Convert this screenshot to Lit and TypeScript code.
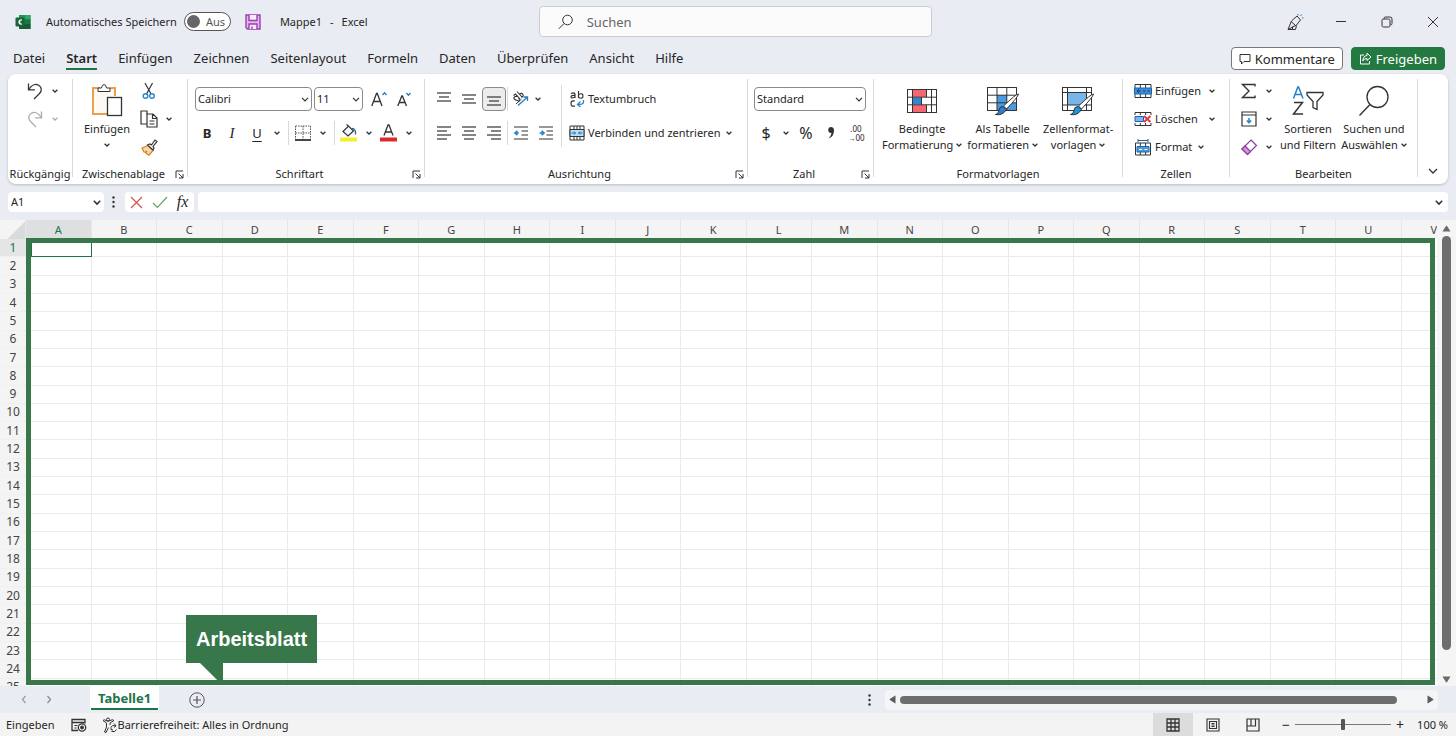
import { LitElement, html, css, svg, nothing, TemplateResult } from "lit";
import { customElement, state } from "lit/decorators.js";
import { classMap } from "lit/directives/class-map.js";

const TABS = ["Datei", "Start", "Einfügen", "Zeichnen", "Seitenlayout", "Formeln", "Daten", "Überprüfen", "Ansicht", "Hilfe"];
const COLUMNS = "ABCDEFGHIJKLMNOPQRSTUV".split("");
const ROWS = Array.from({ length: 25 }, (_, i) => i + 1);

const icon = (w: number, h: number, body: unknown) =>
  html`<svg class="icon" width=${w} height=${h} viewBox="0 0 ${w} ${h}" aria-hidden="true">${body}</svg>`;

const chevron = () => icon(6, 4, svg`<path d="M.6.8 3 3 5.4.8" stroke-width="1.3"/>`);
const boxChevron = () => icon(8, 5, svg`<path d="M1 .8 4 3.800 7 .8" stroke-width="1.200"/>`);
const wideChevron = () => icon(8, 5, svg`<path d="M.8.8 4 4 7.2.8" stroke-width="1.6"/>`);

const lines = (y: number, spans: [number, number][]) =>
  icon(16, 16, spans.map(([a, b], i) => svg`<path d="M${a} ${y + i * 4}H${b}" stroke-width="1.2"/>`));

const I = {
  excel: () => icon(16, 16, svg`<g stroke="none"><path d="M4 1h11.5v14H4z" fill="#1f7a45"/><path d="M9.500 1h6v4.500h-6z" fill="#2fa866"/><path d="M4 1h5.500v4.500H4z" fill="#21915a"/><path d="M9.500 5.500h6V10h-6z" fill="#107c41"/><path d="M4 10h11.500v5H4z" fill="#185c37"/><rect x=".5" y="3.500" width="9" height="9" rx="1" fill="#17653a"/></g><path d="M6.800 6.200A2 2 0 1 0 6.800 9.800M3.500 8h2" stroke="#fff" stroke-width="1.300"/>`),
  save: () => icon(16, 16, svg`<g stroke="#9b3fb0" stroke-width="1.400"><path d="M1 1h14v14H2.500L1 13.500z" fill="#e3b9ec"/><path d="M4 1v5.500h8V1" fill="#f7eafa"/><path d="M4 15v-5h8v5" fill="#f7eafa"/><path d="M7 12.500V15"/></g>`),
  search: () => icon(16, 16, svg`<circle cx="9.500" cy="6" r="4.800"/><path d="M6 9.500.8 14.800"/>`),
  pen: () => icon(18, 18, svg`<path d="M2 16.500 5.500 8 11 3l3.500 4L10.500 12zM5 8.500l5 4.500M2 16.500h7.500l1-4M6.500 16.500v-3"/><path d="M12 1v1.500M14.500 3 15.500 1.500M16 5h1.500" stroke="#2b7bbb"/>`),
  min: () => icon(12, 12, svg`<path d="M1 5.500h10"/>`),
  restore: () => icon(12, 12, svg`<rect x="1" y="3" width="8" height="8" rx="1.500"/><path d="M3 3V2.500Q3 1 4.500 1H9q2 0 2 2v4.500Q11 9 9.500 9"/>`),
  close: () => icon(12, 12, svg`<path d="M1 1l10 10M11 1 1 11"/>`),
  comment: () => icon(12, 12, svg`<path d="M1 1.500h10v7H5L2.500 11V8.500H1z"/>`),
  share: () => icon(13, 13, svg`<path d="M5 3H1.500v9h9V9M8 1.200 12 5 8 8.500V6.500Q5 6.300 3.800 9 4 4 8 3.500z"/>`),
  undo: () => icon(16, 18, svg`<path d="M1.500 1.500v6.300h6.300M1.800 7.500C4.500 3 8.500 1.500 11.700 3.200c3.300 2 3.300 5.800.8 8.300L7 17" stroke-width="1.300"/>`),
  redo: () => icon(16, 18, svg`<path d="M14.500 1.500v6.300H8.200M14.200 7.500C11.500 3 7.500 1.500 4.300 3.200c-3.300 2-3.300 5.800-.8 8.300L9 17" stroke-width="1.300"/>`),
  paste: () => icon(32, 34, svg`<path d="M9 5H2v26h14M19 5h5v8" stroke="#e8a04a" stroke-width="2"/><path d="M3.500 6.500h19v8h-6v15h-13z" fill="#fdfaf5" stroke="none"/><path d="M7 8.500V5h3.500Q11 1.500 13 1.500T15.500 5H19v3.500z" fill="#fff"/><rect x="16.500" y="14.500" width="14" height="18" fill="#fff" stroke-width="1.300"/>`),
  cut: () => icon(14, 18, svg`<path d="M3 1l6 11M10.500 1l-6 11" stroke-width="1.200"/><circle cx="3.500" cy="14" r="2.300" stroke="#2b88c8" stroke-width="1.400"/><circle cx="10" cy="14" r="2.300" stroke="#2b88c8" stroke-width="1.400"/>`),
  copy: () => icon(18, 18, svg`<path d="M7 14H1V1h6v3" stroke-width="1.200"/><path d="M7 4h6l4 4v9H7zM12.500 4v4.500H17M9.500 11h5M9.500 14h5" fill="#fff" stroke-width="1.200"/>`),
  brush: () => icon(17, 17, svg`<path d="M1 9 7 6.500l5 5L8 16q-2-.5-3-2l1-2q-1.500 1.500-3 1z" fill="#f8d9ae" stroke="#d9822b" stroke-width="1.300"/><path d="M6.500 6 9 5l1.500 1 3.500-5 2 1.500L12 7.500l1 1.500-1 2z" fill="#fff" stroke-width="1.200"/>`),
  launcher: () => icon(9, 9, svg`<path d="M1 8V1h7M3.500 3.500 8 8M8 4v4H4"/>`),
  grow: () => icon(16, 16, svg`<path d="M.8 15 5.500 2.500h.8L11 15M2.500 10.500h7" stroke-width="1.300"/><path d="M11.500 4l2-2.200 2 2.200" stroke="#2b7bbb" stroke-width="1.300"/>`),
  shrink: () => icon(14, 16, svg`<path d="M.8 15 4.800 5h.6L9.500 15M2.300 11.500H8" stroke-width="1.300"/><path d="M9.500 2l2 2.200 2-2.200" stroke="#2b7bbb" stroke-width="1.300"/>`),
  borders: () => icon(16, 16, svg`<path d="M.5 1h15M.5 8h15M.5 1v13M8 1v13M15.500 1v13" stroke="#555" stroke-dasharray="1.500 1"/><path d="M0 15h16" stroke-width="1.800"/>`),
  fill: () => icon(18, 18, svg`<path d="M0 13.500h17v4H0z" fill="#f3ee2d" stroke="none"/><path d="M3 7.500 8.500 2l5 5L8 12zM8.500 2 6.500.5" fill="#f4f8fc" stroke-width="1.200"/><path d="M12 4.500q4 0 3.500 6" stroke="#2b5f93" stroke-width="1.300"/>`),
  fontColor: () => icon(18, 18, svg`<path d="M0 13.500h17v4H0z" fill="#d92b2b" stroke="none"/><path d="M4 11.500 8 1h1l4 10.500M5.500 8h6" stroke-width="1.300"/>`),
  orient: () => icon(18, 16, svg`<path d="M6 14.500 15 6.500M11.500 6h4v4" stroke="#2b7bbb" stroke-width="1.300"/><path d="M1.500 4.500 3.500 3 8 8M5.500 5.500Q3 5 2 6.500T5 9.500 6.500 7" stroke-width="1.100"/><path d="M5 .5 10.500 6.500M7.500 3Q10 1.500 11 3.500T9 6" stroke-width="1.100"/><path d="M4 13 9.500 8"/>`),
  wrap: () => icon(16, 18, svg`<path d="M2 3.500Q5 2 6 4v4M6 5.500Q2 5 2 7t4 0M9.500 1v7M9.500 4.500Q14 2.500 14 6T9.500 7.500M6 11q-4-1-4 2.500T6 16" stroke-width="1.200"/><path d="M14.500 10v2q0 2.500-5 2.500M11.500 11.500l-3 3 3 2.500" stroke="#2b88c8" stroke-width="1.300"/>`),
  merge: () => icon(16, 16, svg`<path d="M1 1h14v14H1z" fill="#fff"/><path d="M1 4.500h14v7H1z" fill="#b9ddf5"/><path d="M8 1v3M8 12v3M1 4.500h14M1 11.500h14M5 1v3M11 1v3M5 12v3M11 12v3"/><path d="M2.500 8h4M9.500 8h4M5 6.500 6.500 8 5 9.500M11 6.500 9.500 8 11 9.500" stroke="#1d6fb0"/>`),
  outdent: () => icon(16, 16, svg`<path d="M1 2h14M8.500 6H15M8.500 10H15M1 14h14" stroke-width="1.200"/><path d="M5.800 8H3M4.500 6 2 8l2.500 2" stroke="#2b88c8" stroke-width="1.700"/>`),
  indent: () => icon(16, 16, svg`<path d="M1 2h14M8.500 6H15M8.500 10H15M1 14h14" stroke-width="1.200"/><path d="M1.500 8H5M3.500 6 6 8l-2.500 2" stroke="#2b88c8" stroke-width="1.700"/>`),
  condFormat: () => icon(32, 26, svg`<path d="M1.500 1.500h29v23h-29z" fill="#fff"/><path d="M7 2h13v7H7zM7 17h14v7H7z" fill="#f5686f" stroke="none"/><path d="M7 9.500h8v7H7z" fill="#2f86d6" stroke="none"/><path d="M1.500 1.500h29v23h-29zM1.500 9.200h29M1.500 16.800h29M6.500 1.500v23M20.500 1.500v7.700M20.500 16.800v7.700M15.500 9.200v7.600M25.500 1.500v23"/>`),
  tableFormat: () => icon(34, 30, svg`<path d="M1.500 1.500h29v23h-29z" fill="#fff"/><path d="M11 9h10v15.500H11zM21 17h9.500v7.500H21z" fill="#4a9be2" stroke="none"/><path d="M1.500 1.500h29v23h-29zM1.500 9.200h29M1.500 16.800h29M11 1.500v23M20.800 1.500v23"/><path d="M32.500 8Q30 8 17.500 20l3 3Q32 11 32.500 8z" fill="#fff"/><path d="M17 20.500q-4 0-4 4-.5 3.500-3.500 4 7 1.500 11-5z" fill="#2f7fd0"/>`),
  cellFormat: () => icon(34, 30, svg`<path d="M1.500 1.500h29v23h-29z" fill="#fff"/><path d="M6.500 7h19v12h-19z" fill="#76b6e8" stroke="none"/><path d="M1.500 1.500h29v23h-29zM1.500 6.500h29M1.500 19h29M6.500 1.500v23M25.500 1.500v23"/><path d="M32.500 8Q30 8 17.500 20l3 3Q32 11 32.500 8z" fill="#fff"/><path d="M17 20.500q-4 0-4 4-.5 3.500-3.500 4 7 1.500 11-5z" fill="#1f93dc"/>`),
  insertCells: () => icon(18, 16, svg`<path d="M1 1.500h16v13H1zM6.300 1.500v13M11.600 1.500v13"/><path d="M.5 5h17v6H.5z" fill="#3d8fdd" stroke="#1c65a8"/><path d="M3 8h4M5 6 3 8l2 2M9 8h2.500M13.500 8H16" stroke="#0f3d6b"/>`),
  deleteCells: () => icon(18, 16, svg`<path d="M1 4V1.500h16V4M1 12v2.500h16V12M6.300 1.500V4M11.600 1.500V4M6.300 12v2.500M11.600 12v2.500"/><path d="M1 5.500h8.500v5H1z" fill="#7fb7ea" stroke="#1c65a8"/><path d="M10 5l6.500 6M16.500 5 10 11" stroke="#dd3540" stroke-width="1.800"/>`),
  formatCells: () => icon(18, 18, svg`<path d="M4 1v3M14 1v3M4 2.500h10" stroke="#1c65a8"/><path d="M1.500 5h15v12h-15zM6.300 5v12M11.600 5v12"/><path d="M3 8.500h12v5.500H3z" fill="#4c9be0" stroke="#1c65a8"/><path d="M5 11.500h3M10.500 11.500h3" stroke="#fff"/>`),
  sum: () => icon(16, 16, svg`<path d="M14 3.500V1.500H1.500L8 8l-6.500 6.500H14v-2" stroke-width="1.400"/>`),
  fillDown: () => icon(16, 16, svg`<path d="M1 1h14v14H1zM1 4h14" stroke-width="1.200"/><path d="M8 7v4.500M5.800 9.500 8 11.700l2.200-2.200" stroke="#2b88c8" stroke-width="1.600"/>`),
  eraser: () => icon(16, 16, svg`<path d="M10 1 15.500 6.500 6.500 15.500 1 10z" fill="#fff" stroke="#8c3c9e" stroke-width="1.200"/><path d="M4 7l5.500 5.500-3 3L1 10z" fill="#d893e0" stroke="#8c3c9e" stroke-width="1.200"/>`),
  sort: () => icon(34, 32, svg`<path d="M2.500 13.500 6.800 2h.8L12 13.500M4 9.500h6.500" stroke="#2580c8" stroke-width="1.500"/><path d="M3 17.500h8.500L2.500 29H12" stroke-width="1.500"/><path d="M16 7.500h16v2.500l-6 6.500v8l-4-2v-6l-6-6.500z" stroke-width="1.300"/>`),
  find: () => icon(32, 32, svg`<circle cx="19.500" cy="12" r="10.500" stroke-width="1.300"/><path d="M12 19.500 1.500 30.500" stroke-width="1.400"/>`),
  cancel: () => icon(13, 13, svg`<path d="M1 1l11 11M12 1 1 12" stroke="#c9564f" stroke-width="1.200"/>`),
  accept: () => icon(16, 13, svg`<path d="M1 7l4.500 4.500L15 1" stroke="#5fa36b" stroke-width="1.200"/>`),
  dots: () => icon(3, 12, svg`<g fill="#333" stroke="none"><circle cx="1.500" cy="1.500" r="1.200"/><circle cx="1.500" cy="6" r="1.200"/><circle cx="1.500" cy="10.500" r="1.200"/></g>`),
  prev: () => icon(6, 9, svg`<path d="M4.500 1 1.500 4.500l3 3.500" stroke="#9a9a9a" stroke-width="1.200"/>`),
  next: () => icon(6, 9, svg`<path d="M1.500 1l3 3.500-3 3.500" stroke="#8a8a8a" stroke-width="1.200"/>`),
  add: () => icon(16, 16, svg`<circle cx="8" cy="8" r="7.200" stroke="#555"/><path d="M8 4v8M4 8h8" stroke="#555" stroke-width="1.200"/>`),
  macro: () => icon(16, 14, svg`<path d="M14 5.500V1.500H1v11h6M1 4.500h13" stroke-width="1.300"/><path d="M3.500 7.500h3M3.500 10h2"/><circle cx="11" cy="9.500" r="3.700" stroke-width="1.300"/><circle cx="11" cy="9.500" r="1.500" fill="#333"/>`),
  access: () => icon(16, 16, svg`<circle cx="6" cy="2.500" r="1.500"/><path d="M1 3.500q1-1.500 3 0 2 1.500 4 0 3-1.500 4 0L8 6v2M1 3.500 4.500 6v4l-2 5 1.500.5 2.500-5"/><path d="M14 9q-4-1.500-5 1.500T11 13M14.500 12.500q-1 3-5 2M12 6.500l2 2.300-2 1.700"/>`),
  viewNormal: () => icon(14, 14, svg`<path d="M1 1h12v12H1zM5 1v12M9 1v12M1 5h12M1 9h12" stroke-width="1.300"/>`),
  viewPage: () => icon(14, 14, svg`<path d="M1 1h12v12H1zM3.500 3.500h7v7h-7zM5.500 5.500h3M5.500 7h3M5.500 8.500h3" stroke-width="1.100"/>`),
  viewBreak: () => icon(14, 14, svg`<path d="M1 1h12v12H1zM5 1v7h4.500V1M1 8h4" stroke-width="1.200"/>`),
  triUp: () => icon(9, 7, svg`<path d="M4.500.5Q5 .5 8.500 6.500h-8Q4 .5 4.500.5z" fill="#6b6b6b" stroke="none"/>`),
  triDown: () => icon(9, 7, svg`<path d="M.5.5h8Q5 6.500 4.500 6.500T.5.5z" fill="#6b6b6b" stroke="none"/>`),
  triLeft: () => icon(7, 9, svg`<path d="M6.500.5v8Q.5 5 .5 4.500T6.500.5z" fill="#5c5c5c" stroke="none"/>`),
  triRight: () => icon(7, 9, svg`<path d="M.5.5v8Q6.500 5 6.500 4.500T.5.5z" fill="#5c5c5c" stroke="none"/>`),
};

@customElement("app-root")
export class AppRoot extends LitElement {
  @state() private activeTab = "Start";

  static styles = css`
    :host {
      --ink: #262626;
      --green: #217346;
      --frame: #37774a;
      --rule: #d9d9d9;
      display: flex;
      flex-direction: column;
      height: 100vh;
      min-height: 480px;
      overflow: hidden;
      background: #e9ecf2;
      color: var(--ink);
      font: 11px/16px "Noto Sans", "Open Sans", sans-serif;
    }
    *, *::before, *::after { box-sizing: border-box; }
    button, input, select { font: inherit; color: inherit; margin: 0; }
    button { display: inline-flex; align-items: center; justify-content: center; padding: 0; border: 0; background: none; }
    .icon { display: block; flex: none; fill: none; stroke: #333; stroke-width: 1; overflow: visible; }

    .titlebar { display: grid; grid-template-columns: 37fr 27fr 36fr; align-items: center; height: 43px; flex: none; }
    .title-left { display: flex; align-items: center; padding-left: 15px; white-space: nowrap; }
    .auto { display: flex; align-items: center; gap: 7px; margin: 0 14px 0 15px; }
    .pill { display: flex; align-items: center; gap: 6px; width: 47px; height: 19px; border: 1px solid #555; border-radius: 10px; background: #fff; padding-left: 2px; color: #555; }
    .switch { appearance: none; width: 13px; height: 13px; border-radius: 50%; background: #666; }
    .doc { display: flex; gap: 8px; margin-left: 19px; }
    .search { display: flex; align-items: center; gap: 11px; height: 31px; padding: 0 18px; border: 1px solid #c9ccd1; border-radius: 4px; background: #fbfbfc; font-size: 13px; }
    .search input { flex: 1; min-width: 0; border: 0; outline: 0; background: none; }
    .search input::placeholder { color: #666; opacity: 1; }
    .window { display: flex; justify-content: flex-end; align-items: center; }
    .window button { width: 46px; height: 32px; }

    .tabs { display: flex; align-items: center; height: 31px; flex: none; padding: 0 11px 0 13px; font-size: 13px; line-height: 20px; }
    .tabs nav { display: flex; gap: 21px; flex: 1; }
    .tabs a { margin-top: 1px; color: inherit; text-decoration: none; border-bottom: 2px solid transparent; }
    .tabs a.on { font-weight: 600; border-color: var(--green); }
    .pillbtn { height: 23px; gap: 4px; padding: 0 7px; border: 1px solid #777; border-radius: 4px; background: #fff; }
    .pillbtn.share { margin-left: 8px; background: #23793f; border-color: #23793f; color: #fff; }
    .pillbtn.share .icon { stroke: #fff; }

    .ribbon { display: flex; flex: none; height: 110px; margin: 0 8px; border-radius: 8px; background: #fff; box-shadow: 0 1px 3px #0003; }
    .rule { flex: none; width: 1px; height: 98px; margin-top: 5px; background: var(--rule); }
    .group { display: flex; flex-direction: column; justify-content: space-between; flex: none; padding-bottom: 2px; }
    .label { display: flex; align-items: center; text-align: center; }
    .label span { flex: 1; }
    .label button { margin-right: 3px; width: 10px; height: 10px; }
    .g-undo { width: 64px; }
    .g-clip { width: 114px; }
    .g-font { width: 236px; }
    .g-align { width: 322px; }
    .g-num { width: 125px; }
    .g-style { width: 248px; }
    .g-cells { width: 106px; }
    .g-edit { width: 187px; }
    .rows { display: grid; align-content: start; align-items: center; }
    .r28 { grid-auto-rows: 28px; padding-top: 3px; }
    .r34 { grid-auto-rows: 24px; row-gap: 10px; padding-top: 13px; }
    .row { display: flex; align-items: center; gap: 1px; }
    .ib { width: 24px; height: 24px; font-size: 13px; }
    .ib.on { border: 1px solid #8a8a8a; border-radius: 4px; background: #ececec; }
    .cb { width: 14px; height: 24px; }
    .cb.tight { width: 8px; }
    .off { opacity: .4; }
    .tb { gap: 3px; height: 24px; justify-content: flex-start; }
    .tb .icon:last-child { margin-left: 3px; }
    .wide span { min-width: 46px; text-align: left; }
    .sep { width: 1px; height: 24px; margin: 0 1px 0 3px; background: var(--rule); }
    .align .sep { margin: 0; }
    .bold { font-weight: 700; }
    .ital { font: italic 15px "Liberation Serif", serif; }
    .und { text-decoration: underline; text-underline-offset: 3px; }
    .sign { font-size: 16px; }
    .tiny { font-size: 8px; line-height: 9px; }
    .combo { position: relative; display: flex; align-items: center; }
    .combo select { appearance: none; width: 100%; height: 24px; padding: 0 2px; border: 1px solid #8a8a8a; border-radius: 4px; background: #fff; outline: 0; }
    .combo .icon { position: absolute; right: 3px; pointer-events: none; }
    .c-font { width: 117px; margin-right: 1px; }
    .c-size { width: 49px; margin-right: 3px; }
    .c-num { width: 112px; }
    .big { flex-direction: column; justify-content: flex-start; white-space: nowrap; }
    .big .pic { display: flex; align-items: center; height: 32px; margin-bottom: 4px; }
    .big .line { display: flex; align-items: center; gap: 3px; height: 16px; }
    .bigs { display: flex; align-items: flex-start; padding-top: 11px; }
    .g-undo .rows { padding-left: 15px; }
    .clip { display: flex; align-items: flex-start; padding-left: 11px; }
    .clip .big { padding-top: 9px; margin-right: 7px; }
    .clip .big .pic { height: 34px; }
    .g-font .rows { padding-left: 7px; }
    .g-num .rows { padding-left: 6px; }
    .align { display: flex; padding-left: 7px; }
    .align .tall { width: 1px; height: 62px; margin: 11px 7px 0 0; background: var(--rule); }
    .align .left { width: 129px; }
    .g-style .bigs { padding-left: 8px; gap: 5px; }
    .g-cells .rows { padding-left: 11px; }
    .g-cells .wide .icon:last-child { margin-left: 5px; }
    .edit { display: flex; padding-left: 7px; }
    .edit .bigs { gap: 5px; padding-left: 4px; }
    .fold { flex: 1; display: flex; align-items: flex-end; justify-content: center; padding-bottom: 7px; }
    .fold button { width: 20px; height: 12px; }

    .formula { display: flex; align-items: center; flex: none; height: 20px; margin: 8px; gap: 4px; }
    .name { width: 96px; margin-right: 4px; }
    .name select { height: 20px; border-color: #fff; }
    .fx { display: flex; align-items: center; height: 20px; margin-left: 6px; background: #fff; border-radius: 4px; }
    .fx button { width: 23px; height: 20px; }
    .fx .func { font: italic 16px "Liberation Serif", serif; }
    .entry { display: flex; flex: 1; align-items: center; height: 20px; padding-right: 5px; background: #fff; border-radius: 4px; }
    .entry input { flex: 1; min-width: 0; border: 0; outline: 0; background: none; height: 18px; }

    .work { display: flex; flex: 1; min-height: 0; background: #f5f5f6; }
    .sheet { position: relative; flex: 1; min-width: 0; overflow: hidden; background: #fff; }
    table { width: calc(100% + 30px); height: calc(100% + 11px); table-layout: fixed; border-collapse: separate; border-spacing: 0; }
    th { padding: 0; font-weight: 400; font-size: 12px; line-height: 16px; background: #f4f4f5; color: #444; }
    thead th { height: 19px; font-size: 11px; border-right: 1px solid #e6e6e8; }
    thead th.on { background: #dedfe0; color: var(--green); }
    tbody th { border-bottom: 1px solid #f0f0f1; }
    tbody th.on { background: #e4e5e6; color: var(--green); }
    .corner { width: 26px; background: linear-gradient(135deg, #f4f4f5 60%, #d9dadb 60%); }
    td { padding: 0; border-right: 1px solid #eaeaea; border-bottom: 1px solid #eaeaea; }
    td.on { border-color: var(--green); box-shadow: inset 5px 0 #fff, inset 6px 0 var(--green); }
    .frame { position: absolute; inset: 18px 2px 1px 26px; border: 5px solid var(--frame); pointer-events: none; }
    .callout { position: absolute; left: 186px; bottom: 23px; padding: 12px 10px; background: var(--frame); color: #fff; font: bold 20px/24px "Liberation Sans", Arial, sans-serif; }
    .callout::after { content: ""; position: absolute; top: 100%; left: 14px; width: 23px; height: 20px; background: var(--frame); clip-path: polygon(0 0, 100% 0, 100% 100%, 88% 100%); }
    .vbar { display: flex; flex-direction: column; align-items: center; width: 19px; gap: 3px; padding: 4px 0 2px; }
    .vbar button, .hbar button { flex: none; width: 9px; height: 9px; }
    .vtrack { flex: 1; width: 9px; }
    .vthumb { width: 9px; height: 95%; border-radius: 5px; background: #6e6e6e; }

    .sheets { display: flex; align-items: center; flex: none; height: 27px; }
    .sheets .step { width: 25px; height: 24px; }
    .steps { display: flex; width: 90px; padding-left: 11px; }
    .tab { align-self: stretch; margin-bottom: 3px; padding: 0 1px; background: #fff; color: var(--green); font-size: 13px; font-weight: 700; }
    .tab span { padding: 2px 7px 0; border-bottom: 2px solid var(--green); line-height: 20px; }
    .add { margin-left: 30px; }
    .space { flex: 1; }
    .hbar { display: flex; align-items: center; gap: 3px; width: 38%; height: 20px; margin: 0 18px 0 14px; padding: 0 3px; background: #f4f5f7; border-radius: 4px; }
    .htrack { flex: 1; height: 8px; }
    .hthumb { width: 95%; height: 8px; border-radius: 4px; background: #6e6e6e; }

    .status { display: flex; align-items: center; flex: none; height: 23px; padding: 0 8px 0 6px; background: #f3f3f3; white-space: nowrap; }
    .macro { margin: 0 15px 0 16px; }
    .view { width: 40px; height: 23px; }
    .view.on { background: #dcdcdc; }
    .zoom { display: flex; align-items: center; gap: 4px; margin: 0 12px 0 8px; }
    .zoom button { width: 10px; height: 16px; font-size: 14px; }
    input[type="range"] { appearance: none; width: 96px; height: 16px; background: linear-gradient(#777, #777) center / 100% 1px no-repeat; }
    input[type="range"]::-webkit-slider-thumb { appearance: none; width: 4px; height: 11px; border-radius: 1px; background: #555; }
  `;

  private ib(label: string, body: unknown, cls = "") {
    return html`<button class="ib ${cls}" aria-label=${label}>${body}</button>`;
  }

  private cb(label: string, cls = "") {
    return html`<button class="cb ${cls}" aria-label="${label}: Optionen">${chevron()}</button>`;
  }

  private combo(cls: string, label: string, value: string, arrow = boxChevron) {
    return html`<span class="combo ${cls}"><select aria-label=${label}><option>${value}</option></select>${arrow()}</span>`;
  }

  private big(pic: TemplateResult, first: string, second: string, menu = true) {
    return html`<button class="big"><span class="pic">${pic}</span><span class="line">${first}</span><span class="line">${second}${menu ? chevron() : nothing}</span></button>`;
  }

  private tb(pic: TemplateResult, text: string, menu = true, cls = "") {
    return html`<button class="tb ${cls}">${pic}<span>${text}</span>${menu ? chevron() : nothing}</button>`;
  }

  private group(cls: string, label: string, body: TemplateResult, launcher = false) {
    return html`<section class="group ${cls}" aria-label=${label}>
        ${body}
        <div class="label"><span>${label}</span>${launcher ? html`<button aria-label="${label}: Einstellungen">${I.launcher()}</button>` : nothing}</div>
      </section><span class="rule"></span>`;
  }

  private titlebar() {
    return html`<header class="titlebar">
      <div class="title-left">
        ${I.excel()}
        <label class="auto">Automatisches Speichern
          <span class="pill"><input class="switch" type="checkbox" role="switch" />Aus</span>
        </label>
        <button aria-label="Speichern">${I.save()}</button>
        <span class="doc"><span>Mappe1</span><span>-</span><span>Excel</span></span>
      </div>
      <label class="search">${I.search()}<input type="search" placeholder="Suchen" aria-label="Suchen" /></label>
      <div class="window">
        <button aria-label="Stift">${I.pen()}</button>
        <button aria-label="Minimieren">${I.min()}</button>
        <button aria-label="Wiederherstellen">${I.restore()}</button>
        <button aria-label="Schließen">${I.close()}</button>
      </div>
    </header>`;
  }

  private tabbar() {
    return html`<div class="tabs">
      <nav>${TABS.map((t) => html`<a href="#" class=${classMap({ on: t === this.activeTab })} @click=${(e: Event) => { e.preventDefault(); this.activeTab = t; }}>${t}</a>`)}</nav>
      <button class="pillbtn">${I.comment()}Kommentare</button>
      <button class="pillbtn share">${I.share()}Freigeben</button>
    </div>`;
  }

  private ribbon() {
    return html`<div class="ribbon">
      ${this.group("g-undo", "Rückgängig", html`<div class="rows r28">
        <div class="row">${this.ib("Rückgängig", I.undo())}${this.cb("Rückgängig")}</div>
        <div class="row off">${this.ib("Wiederholen", I.redo())}${this.cb("Wiederholen")}</div>
      </div>`)}
      ${this.group("g-clip", "Zwischenablage", html`<div class="clip">
        <button class="big"><span class="pic">${I.paste()}</span><span class="line">Einfügen</span><span class="line">${chevron()}</span></button>
        <div class="rows r28">
          <div class="row">${this.ib("Ausschneiden", I.cut())}</div>
          <div class="row">${this.ib("Kopieren", I.copy())}${this.cb("Kopieren")}</div>
          <div class="row">${this.ib("Format übertragen", I.brush())}</div>
        </div>
      </div>`, true)}
      ${this.group("g-font", "Schriftart", html`<div class="rows r34">
        <div class="row">${this.combo("c-font", "Schriftart", "Calibri")}${this.combo("c-size", "Schriftgrad", "11")}${this.ib("Schrift vergrößern", I.grow())}${this.ib("Schrift verkleinern", I.shrink())}</div>
        <div class="row">
          ${this.ib("Fett", "B", "bold")}${this.ib("Kursiv", "I", "ital")}${this.ib("Unterstrichen", "U", "und")}${this.cb("Unterstrichen")}
          <span class="sep"></span>${this.ib("Rahmen", I.borders())}${this.cb("Rahmen")}
          <span class="sep"></span>${this.ib("Füllfarbe", I.fill())}${this.cb("Füllfarbe")}${this.ib("Schriftfarbe", I.fontColor())}${this.cb("Schriftfarbe")}
        </div>
      </div>`, true)}
      ${this.group("g-align", "Ausrichtung", html`<div class="align">
        <div class="rows r34 left">
          <div class="row">
            ${this.ib("Oben ausrichten", lines(2, [[1, 15], [3, 13], [1, 15]]))}${this.ib("Zentriert ausrichten", lines(4, [[1, 15], [3, 13], [1, 15]]))}${this.ib("Unten ausrichten", lines(6, [[1, 15], [3, 13], [1, 15]]), "on")}
            <span class="sep"></span>${this.ib("Ausrichtung", I.orient())}${this.cb("Ausrichtung", "tight")}
          </div>
          <div class="row">
            ${this.ib("Linksbündig", lines(2, [[1, 15], [1, 11], [1, 15], [1, 11]]))}${this.ib("Zentriert", lines(2, [[1, 15], [3, 13], [1, 15], [3, 13]]))}${this.ib("Rechtsbündig", lines(2, [[1, 15], [5, 15], [1, 15], [5, 15]]))}
            <span class="sep"></span>${this.ib("Einzug verkleinern", I.outdent())}${this.ib("Einzug vergrößern", I.indent())}
          </div>
        </div>
        <span class="tall"></span>
        <div class="rows r34">${this.tb(I.wrap(), "Textumbruch", false)}${this.tb(I.merge(), "Verbinden und zentrieren")}</div>
      </div>`, true)}
      ${this.group("g-num", "Zahl", html`<div class="rows r34">
        <div class="row">${this.combo("c-num", "Zahlenformat", "Standard")}</div>
        <div class="row">${this.ib("Währung", "$", "sign")}${this.cb("Währung")}${this.ib("Prozent", "%", "sign")}${this.ib("Tausendertrennzeichen", html`<svg class="icon" width="8" height="14" viewBox="0 0 8 14"><path d="M4 1a3 3 0 1 0 .5 6Q4 10 1.500 12.500 7 10.500 7 4.500 7 1 4 1z" fill="#333" stroke="none"/></svg>`)}${this.ib("Dezimalstelle", html`<span>.00<br />→00</span>`, "tiny")}</div>
      </div>`, true)}
      ${this.group("g-style", "Formatvorlagen", html`<div class="bigs">
        ${this.big(I.condFormat(), "Bedingte", "Formatierung")}
        ${this.big(I.tableFormat(), "Als Tabelle", "formatieren")}
        ${this.big(I.cellFormat(), "Zellenformat-", "vorlagen")}
      </div>`)}
      ${this.group("g-cells", "Zellen", html`<div class="rows r28">
        ${this.tb(I.insertCells(), "Einfügen", true, "wide")}
        ${this.tb(I.deleteCells(), "Löschen", true, "wide")}
        ${this.tb(I.formatCells(), "Format")}
      </div>`)}
      ${this.group("g-edit", "Bearbeiten", html`<div class="edit">
        <div class="rows r28">
          <div class="row">${this.ib("Summe", I.sum())}${this.cb("Summe")}</div>
          <div class="row">${this.ib("Ausfüllen", I.fillDown())}${this.cb("Ausfüllen")}</div>
          <div class="row">${this.ib("Löschen", I.eraser())}${this.cb("Löschen")}</div>
        </div>
        <div class="bigs">
          ${this.big(I.sort(), "Sortieren", "und Filtern", false)}
          ${this.big(I.find(), "Suchen und", "Auswählen")}
        </div>
      </div>`)}
      <div class="fold"><button aria-label="Menüband reduzieren">${icon(10, 6, svg`<path d="M1 1l4 4 4-4" stroke-width="1.300"/>`)}</button></div>
    </div>`;
  }

  private formulaBar() {
    return html`<div class="formula">
      ${this.combo("name", "Namenfeld", "A1", wideChevron)}
      ${I.dots()}
      <div class="fx"><button aria-label="Abbrechen">${I.cancel()}</button><button aria-label="Eingeben">${I.accept()}</button><button class="func" aria-label="Funktion einfügen">fx</button></div>
      <div class="entry"><input type="text" aria-label="Bearbeitungsleiste" /><button aria-label="Erweitern">${wideChevron()}</button></div>
    </div>`;
  }

  private sheet() {
    return html`<main class="work">
      <div class="sheet">
        <table>
          <thead><tr><th class="corner"></th>${COLUMNS.map((c, i) => html`<th scope="col" class=${classMap({ on: i === 0 })}>${c}</th>`)}</tr></thead>
          <tbody>${ROWS.map((r) => html`<tr><th scope="row" class=${classMap({ on: r === 1 })}>${r}</th>${COLUMNS.map((_, i) => html`<td class=${classMap({ on: r === 1 && i === 0 })}></td>`)}</tr>`)}</tbody>
        </table>
        <div class="frame"></div>
        <div class="callout">Arbeitsblatt</div>
      </div>
      <div class="vbar"><button aria-label="Nach oben">${I.triUp()}</button><div class="vtrack"><div class="vthumb"></div></div><button aria-label="Nach unten">${I.triDown()}</button></div>
    </main>`;
  }

  private footer() {
    return html`<div class="sheets">
        <div class="steps"><button class="step" aria-label="Vorheriges Blatt">${I.prev()}</button><button class="step" aria-label="Nächstes Blatt">${I.next()}</button></div>
        <button class="tab"><span>Tabelle1</span></button>
        <button class="add" aria-label="Neues Blatt">${I.add()}</button>
        <span class="space"></span>
        ${I.dots()}
        <div class="hbar"><button aria-label="Nach links">${I.triLeft()}</button><div class="htrack"><div class="hthumb"></div></div><button aria-label="Nach rechts">${I.triRight()}</button></div>
      </div>
      <footer class="status">
        <span>Eingeben</span>
        <button class="macro" aria-label="Makro aufzeichnen">${I.macro()}</button>
        ${I.access()}<span>Barrierefreiheit: Alles in Ordnung</span>
        <span class="space"></span>
        <button class="view on" aria-label="Normal">${I.viewNormal()}</button>
        <button class="view" aria-label="Seitenlayout">${I.viewPage()}</button>
        <button class="view" aria-label="Umbruchvorschau">${I.viewBreak()}</button>
        <span class="zoom"><button aria-label="Verkleinern">−</button><input type="range" min="0" max="200" value="100" aria-label="Zoom" /><button aria-label="Vergrößern">+</button></span>
        <span>100 %</span>
      </footer>`;
  }

  render() {
    return html`${this.titlebar()}${this.tabbar()}${this.ribbon()}${this.formulaBar()}${this.sheet()}${this.footer()}`;
  }
}
